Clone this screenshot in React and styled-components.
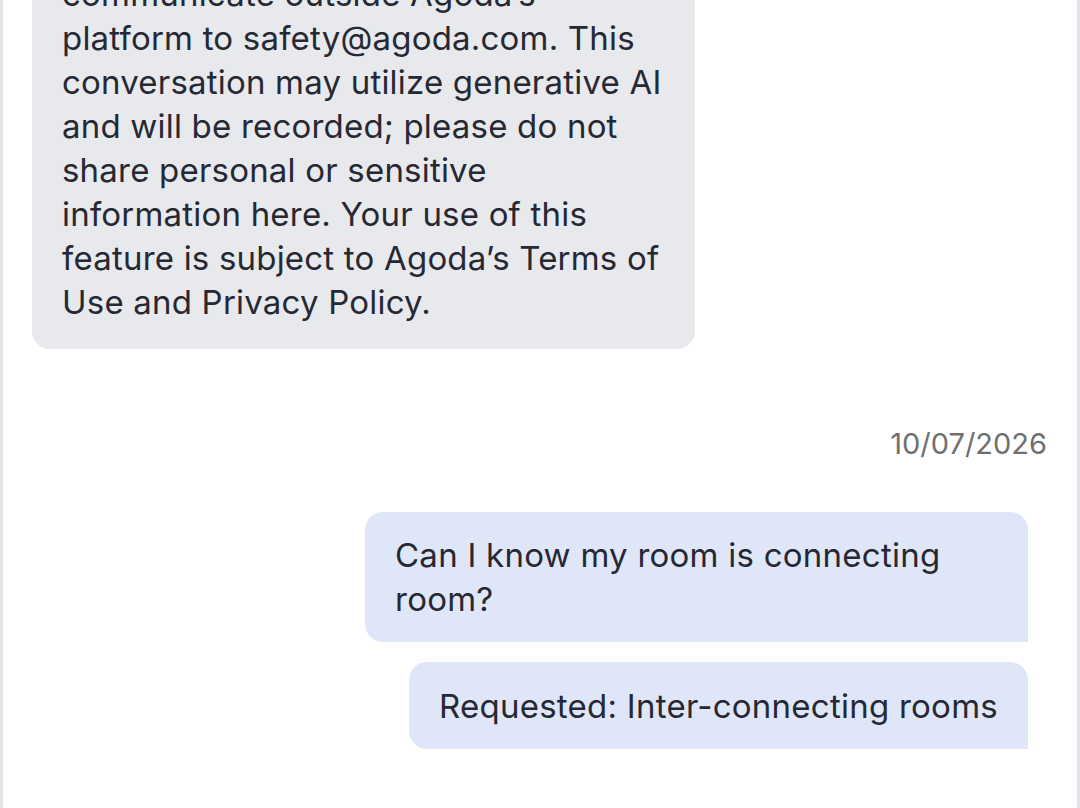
import React from 'react';
import styled, { createGlobalStyle } from 'styled-components';

const GlobalStyle = createGlobalStyle`
  html, body {
    margin: 0;
    padding: 0;
    background: #ffffff;
  }
  body {
    font-family: Inter, "Open Sans", "Noto Sans", sans-serif;
    -webkit-font-smoothing: antialiased;
  }
`;

// lines kept as in the app so wrapping matches
const notice = [
  'For your safety, please report any',
  'requests to pay, share details or',
  'communicate outside Agoda’s',
  'platform to safety@agoda.com. This',
  'conversation may utilize generative AI',
  'and will be recorded; please do not',
  'share personal or sensitive',
  'information here. Your use of this',
  'feature is subject to Agoda’s Terms of',
  'Use and Privacy Policy.',
];

const outgoing = [
  { id: 2, text: 'Can I know my room is connecting room?', wide: true },
  { id: 3, text: 'Requested: Inter-connecting rooms' },
];

const App = () => {
  return (
    <>
      <GlobalStyle />
      <StScreen>
        <StThread>
          <StIncoming>
            {notice.map((line, i) => (
              <StLine key={i}>{line}</StLine>
            ))}
          </StIncoming>
          <StDate>10/07/2026</StDate>
          <StOutgoingGroup>
            {outgoing.map((m) => (
              <StOutgoing key={m.id} $wide={m.wide}>
                {m.text}
              </StOutgoing>
            ))}
          </StOutgoingGroup>
        </StThread>
      </StScreen>
    </>
  );
};

const StScreen = styled.div`
  height: 808px;
  overflow: hidden;
  box-sizing: border-box;
  border-left: 3px solid #e4e4e8;
  border-right: 3px solid #e4e4e8;
  display: flex;
  flex-direction: column;
  justify-content: flex-end;
`;

const StThread = styled.div`
  display: flex;
  flex-direction: column;
  padding: 0 49px 59px 29px;
`;

const StIncoming = styled.div`
  width: 663px;
  box-sizing: border-box;
  background: #e8e9ed;
  color: #262833;
  font-size: 33px;
  letter-spacing: 0.2px;
  line-height: 44px;
  padding: 20px 30px 25px 30px;
  border-radius: 18px;
`;

const StLine = styled.span`
  display: block;
  white-space: nowrap;
`;

const StDate = styled.div`
  align-self: flex-end;
  margin: 77px -19px 0 0;
  color: #6f6f72;
  font-size: 29px;
  line-height: 36px;
`;

const StOutgoingGroup = styled.div`
  display: flex;
  flex-direction: column;
  align-items: flex-end;
  gap: 20px;
  margin-top: 50px;
`;

const StOutgoing = styled.div`
  box-sizing: border-box;
  width: ${(p) => (p.$wide ? '663px' : 'auto')};
  background: #dfe6f8;
  color: #262833;
  font-size: 33px;
  letter-spacing: 0.25px;
  line-height: 44px;
  padding: ${(p) => (p.$wide ? '21px 30px' : '22px 30px 21px 30px')};
  border-radius: 18px 18px 0 18px;
`;

export default App;
